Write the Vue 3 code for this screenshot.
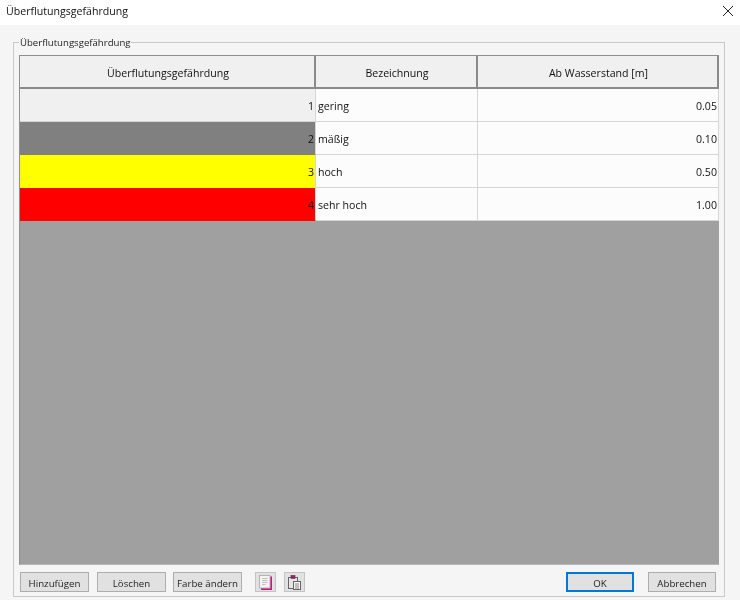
<script setup>
const rows = [
  { id: 1, name: 'gering', level: '0.05', tone: 'plain' },
  { id: 2, name: 'mäßig', level: '0.10', tone: 'gray' },
  { id: 3, name: 'hoch', level: '0.50', tone: 'yellow' },
  { id: 4, name: 'sehr hoch', level: '1.00', tone: 'red' },
]
</script>

<template>
  <div class="dialog">
    <header class="titlebar">
      <span class="title">Überflutungsgefährdung</span>
      <svg class="close" width="12" height="12" viewBox="0 0 12 12"><path d="M1 1 L11 11 M11 1 L1 11" stroke="#222" stroke-width="1" fill="none"/></svg>
    </header>
    <main class="body">
      <fieldset class="group">
        <legend>Überflutungsgefährdung</legend>
        <div class="grid">
          <div class="row head">
            <div class="cell c1">Überflutungsgefährdung</div>
            <div class="cell c2">Bezeichnung</div>
            <div class="cell c3">Ab Wasserstand [m]</div>
          </div>
          <div v-for="r in rows" :key="r.id" class="row data">
            <div class="cell c1 num" :class="r.tone">{{ r.id }}</div>
            <div class="cell c2 name">{{ r.name }}</div>
            <div class="cell c3 num">{{ r.level }}</div>
          </div>
        </div>
        <div class="actions">
          <button class="btn">Hinzufügen</button>
          <button class="btn">Löschen</button>
          <button class="btn third">Farbe ändern</button>
          <button class="icon first" aria-label="Kopieren">
            <svg width="17" height="17" viewBox="0 0 17 17">
              <path d="M14 2.5 V15 H4" stroke="#c2187f" stroke-width="2" fill="none"/>
              <rect x="2.5" y="1.5" width="10.5" height="12.5" fill="#f4f4f4" stroke="#b4b4b4"/>
              <path d="M5 4.5H10.5M5 6.5H10.5M5 8.5H10.5M5 10.5H8.5" stroke="#c0c0c0"/>
            </svg>
          </button>
          <button class="icon" aria-label="Einfügen">
            <svg width="17" height="17" viewBox="0 0 17 17">
              <rect x="2.5" y="3.5" width="9" height="11" fill="#e6e6e6" stroke="#666"/>
              <rect x="5" y="1.5" width="4" height="3" fill="#8a2a6a" stroke="#7a1a5a" stroke-width=".6"/>
              <rect x="7.5" y="7.5" width="7" height="8" fill="#f5f5f5" stroke="#666"/>
              <path d="M9 10H13M9 12H13M9 14H13" stroke="#888"/>
            </svg>
          </button>
          <span class="spacer"></span>
          <button class="btn ok">OK</button>
          <button class="btn cancel">Abbrechen</button>
        </div>
      </fieldset>
    </main>
  </div>
</template>

<style>
html, body { margin: 0; background: #f5f5f5; }
</style>

<style scoped>
.dialog {
  width: 740px;
  height: 600px;
  display: flex;
  flex-direction: column;
  overflow: hidden;
  font-family: "Open Sans", "Noto Sans", sans-serif;
  font-size: 10.6px;
  font-weight: 500;
  color: #111;
  filter: blur(0.35px);
}
.titlebar {
  height: 25px;
  flex: none;
  background: #fff;
  display: flex;
  align-items: center;
  justify-content: space-between;
  padding: 0 6px 3px 6px;
  box-sizing: border-box;
}
.body {
  flex: 1;
  background: #f5f5f5;
  padding: 11px 15px 3px 13px;
  display: flex;
  min-height: 0;
}
.group {
  flex: 1;
  min-width: 0;
  margin: 0;
  padding: 6px 5px 0 5px;
  border: 1px solid #c8c8c8;
  display: flex;
  flex-direction: column;
  box-sizing: border-box;
}
.group legend {
  padding: 0 1px;
  margin-left: 0;
  font-size: 9.6px;
  line-height: 13px;
  color: #222;
}
.grid {
  height: 510px;
  flex: none;
  box-sizing: border-box;
  background: #a0a0a0;
  border: 1px solid #8f8f8f;
  border-right: none;
  border-bottom-color: #b8b8b8;
  display: flex;
  flex-direction: column;
}
.row { display: flex; }
.head { height: 33px; }
.data { height: 33px; }
.cell {
  box-sizing: border-box;
  display: flex;
  align-items: center;
  padding-top: 2px;
  background: #fcfcfc;
  border-right: 1px solid #d6d6d6;
  border-bottom: 1px solid #d6d6d6;
}
.c1 { width: 296px; }
.c2 { width: 162px; }
.c3 { width: 241px; }
.head .cell {
  justify-content: center;
  padding-left: 2px;
  background: #f0f0f0;
  border-right: 2px solid #8a8a8a;
  border-bottom: 2px solid #8a8a8a;
}
.name { padding-left: 2px; }
.num { justify-content: flex-end; padding-right: 1px; }
.plain { background: #f0f0f0; }
.gray { background: #808080; border-bottom-color: #808080; }
.yellow { background: #ffff00; border-bottom-color: #ffff00; }
.red { background: #ff0000; border-bottom-color: #ff0000; }
.actions {
  display: flex;
  align-items: center;
  padding: 7px 3px 0 1px;
  gap: 8px;
}
.btn {
  width: 69px;
  height: 20px;
  padding: 2px 0 0;
  font: inherit;
  font-size: 9.7px;
  color: #222;
  background: #e1e1e1;
  border: 1px solid #adadad;
  outline: none;
}
.third { margin-left: -1px; }
.icon {
  width: 21px;
  height: 20px;
  padding: 0;
  background: #e1e1e1;
  border: 1px solid #c4c4c4;
  display: flex;
  align-items: center;
  justify-content: center;
}
.first { margin-left: 5px; }
.spacer { flex: 1; }
.ok { width: 68px; border: 2px solid #0078d7; margin-right: 6px; }
.cancel { width: 68px; }
</style>
